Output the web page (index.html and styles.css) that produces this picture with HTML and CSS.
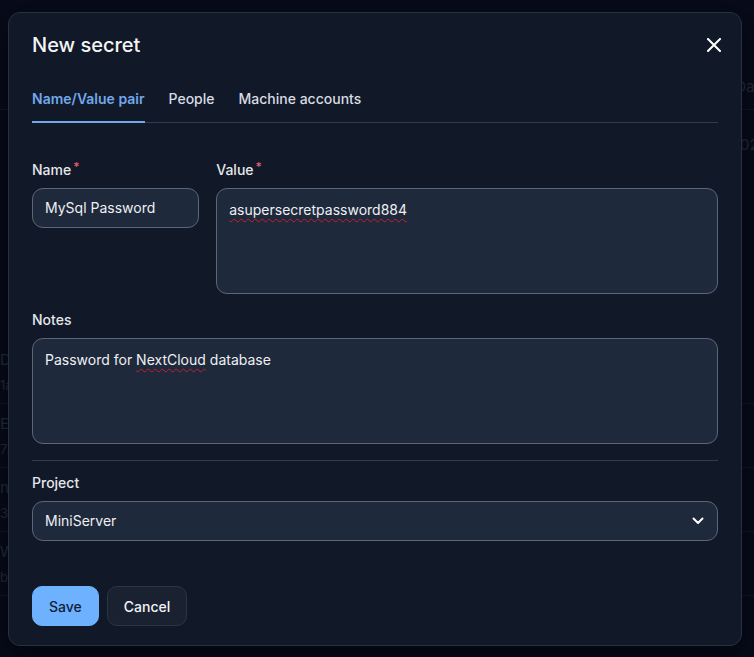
FILE: index.html
```html
<!DOCTYPE html>
<html lang="en">
<head>
<meta charset="utf-8">
<title>New secret</title>
<link rel="stylesheet" href="styles.css">
</head>
<body>
<div class="page">
  <div class="page-head"><span class="ph-right">Date</span></div>
  <div class="top-row"><span class="ph-right">2024</span></div>
  <div class="rows">
    <div class="row"><div class="t1">Docker</div><div class="t2">1a2f</div></div>
    <div class="row"><div class="t1">Email</div><div class="t2">7b3e</div></div>
    <div class="row"><div class="t1">nfs</div><div class="t2">3c88</div></div>
    <div class="row"><div class="t1">Wifi</div><div class="t2">b001</div></div>
  </div>
</div>

<div class="dialog" role="dialog" aria-label="New secret">
  <div class="dialog-head">
    <h1 class="title">New secret</h1>
    <button class="close" aria-label="Close">
      <svg width="14" height="14" viewBox="0 0 14 14"><path d="M1 1 L13 13 M13 1 L1 13" stroke="#ffffff" stroke-width="2" stroke-linecap="square" fill="none"/></svg>
    </button>
  </div>

  <div class="tabs">
    <div class="tab active">Name/Value pair</div>
    <div class="tab">People</div>
    <div class="tab">Machine accounts</div>
  </div>

  <div class="form">
    <div class="pair">
      <div class="field">
        <div class="label">Name<span class="req">*</span></div>
        <div class="input"><span>MySql Password</span></div>
      </div>
      <div class="field">
        <div class="label">Value<span class="req">*</span></div>
        <div class="input area"><p class="text"><span class="misspelled">asupersecretpassword884</span></p></div>
      </div>
    </div>

    <div class="field notes">
      <div class="label">Notes</div>
      <div class="input area"><p class="text">Password for <span class="misspelled">NextCloud</span> database</p></div>
    </div>

    <div class="divider"></div>

    <div class="field">
      <div class="label">Project</div>
      <div class="input select">
        <span>MiniServer</span>
        <svg width="12" height="8" viewBox="0 0 12 8"><path d="M1.5 1.5 L6 6 L10.5 1.5" stroke="#ffffff" stroke-width="2" fill="none" stroke-linecap="round" stroke-linejoin="round"/></svg>
      </div>
    </div>

    <div class="actions">
      <button class="btn primary">Save</button>
      <button class="btn secondary">Cancel</button>
    </div>
  </div>
</div>
</body>
</html>
```

FILE: styles.css
```css
* { box-sizing: border-box; }

html, body {
  margin: 0;
  height: 100%;
}

body {
  background: #070b1a;
  font-family: Inter, "Noto Sans", sans-serif;
  color: #e5e7eb;
  overflow: hidden;
}

/* dimmed page behind the dialog */
.page {
  color: #232a3a;
  font-size: 15px;
  line-height: 20px;
}

.page-head {
  display: flex;
  justify-content: flex-end;
  padding-top: 77px;
  height: 110px;
  border-bottom: 1px solid #111726;
}

.top-row {
  display: flex;
  justify-content: flex-end;
  padding-top: 25px;
  height: 230px;
}

.ph-right {
  margin-right: -14px;
}

.row {
  height: 64px;
  padding-top: 10px;
  border-bottom: 1px solid #111726;
}

.row .t1 { font-size: 15px; line-height: 20px; }
.row .t2 { font-size: 13px; line-height: 20px; margin-top: 5px; }

/* dialog */
.dialog {
  position: absolute;
  left: 8px;
  top: 12px;
  width: 734px;
  height: 634px;
  background: #111827;
  border: 1px solid #283041;
  border-radius: 12px;
  padding: 18px 23px 19px;
  box-shadow: 0 10px 30px rgba(0, 0, 0, 0.5);
}

.dialog-head {
  display: flex;
  justify-content: space-between;
  align-items: center;
  height: 28px;
}

.title {
  margin: 0;
  font-size: 20px;
  line-height: 28px;
  font-weight: 500;
  color: #f3f4f6;
}

.close {
  background: none;
  border: 0;
  padding: 0;
  width: 14px;
  height: 14px;
  margin-right: -3px;
  display: flex;
}

.tabs {
  display: flex;
  gap: 24px;
  margin-top: 30px;
  border-bottom: 1px solid #343c4c;
}

.tab {
  font-size: 14px;
  line-height: 20px;
  font-weight: 500;
  color: #d7dce4;
  padding-bottom: 12px;
  border-bottom: 2px solid transparent;
  margin-bottom: -1px;
}

.tab.active {
  color: #72a8ea;
  font-weight: 600;
  border-bottom-color: #72a8ea;
}

.form {
  padding-top: 34px;
}

.pair {
  display: grid;
  grid-template-columns: 1fr 3fr;
  gap: 17px;
}

.label {
  font-size: 14px;
  line-height: 20px;
  font-weight: 500;
  color: #e5e7eb;
  margin-bottom: 8px;
}

.req {
  color: #e5616c;
  font-size: 12px;
  vertical-align: 4px;
  margin-left: 2px;
}

.input {
  height: 40px;
  background: #1e293b;
  border: 1px solid #5d6678;
  border-radius: 11px;
  padding: 0 12px;
  font-size: 14px;
  line-height: 20px;
  color: #eef0f3;
  display: flex;
  align-items: center;
}

.input.area {
  height: 106px;
  align-items: flex-start;
  padding-top: 11px;
}

.text {
  margin: 0;
}

.misspelled {
  text-decoration: underline wavy #c4202c;
  text-decoration-thickness: 1px;
  text-underline-offset: 3px;
}

.notes {
  margin-top: 16px;
}

.divider {
  height: 1px;
  background: #343c4c;
  margin: 16px 0 12px;
}

.input.select {
  justify-content: space-between;
  padding-right: 13px;
}

.actions {
  display: flex;
  gap: 8px;
  margin-top: 45px;
}

.btn {
  height: 40px;
  border-radius: 10px;
  font-family: Inter, "Noto Sans", sans-serif;
  font-size: 14px;
  font-weight: 500;
  padding: 0 16px;
}

.btn.primary {
  background: #6db1ff;
  color: #10213a;
  border: 1px solid #6db1ff;
}

.btn.secondary {
  background: #1a2232;
  color: #f1f3f6;
  border: 1px solid #2d3545;
}
```
